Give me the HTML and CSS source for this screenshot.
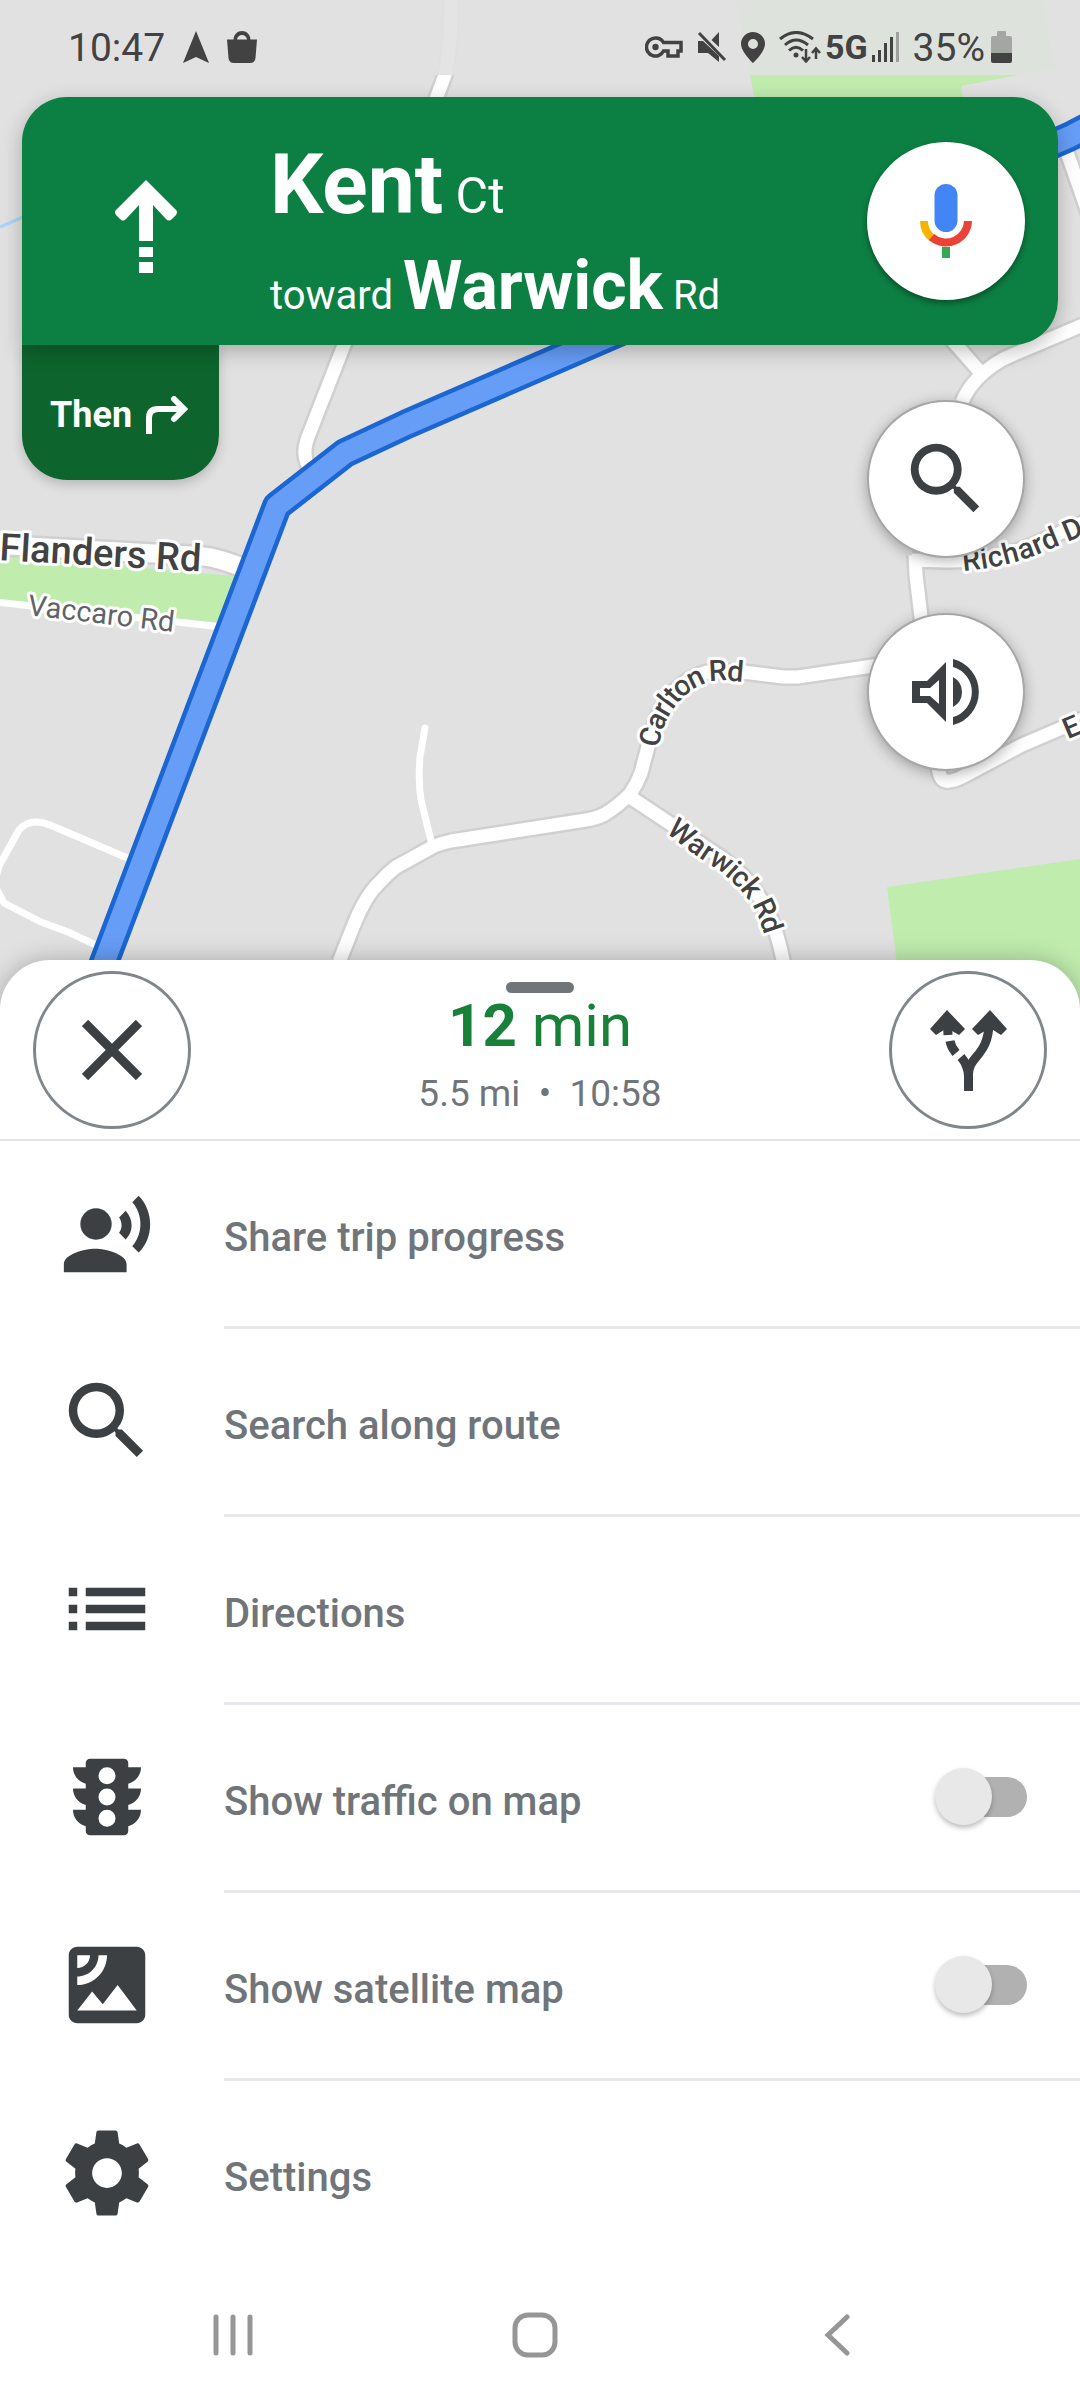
FILE: index.html
```html
<!DOCTYPE html>
<html lang="en">
<head>
  <meta charset="UTF-8" />
  <meta name="viewport" content="width=device-width, initial-scale=1.0"/>
  <title>Navigation</title>
  <link rel="stylesheet" href="styles.css">
</head>
<body>
  <div class="app">
    <main class="nav-view">
      <svg class="map" viewBox="0 0 1080 1010" preserveAspectRatio="xMidYMin slice" role="img" aria-label="Map">
        <defs>
          <path id="carltonPath" d="M649 746Q653 717 670 697Q687 676 714 671Q727 669 772 676"/>
          <path id="warwickPath" d="M672 824Q696 845 723 861Q753 884 765 908Q773 925 779 952"/>
          <path id="richardPath" d="M962 561Q1000 558 1032 546L1130 505"/>
          <path id="estatePath" d="M1064 730L1140 698"/>
          <path id="flandersPath" d="M-1 560L230 573"/>
          <path id="vaccaroPath" d="M27 615L200 635"/>
          <g id="roads">
            <path d="M451 0V20Q450 50 445 75L344 345L308 437Q303 450 306 460Q307 466 315 475"/>
            <path d="M339 962L355 922Q366 895 380 882Q388 873 396 867L434 846Q442 843 451 841L586 820Q598 818 605 814Q618 806 630 794Q637 784 641 773L649 743Q655 715 669 697Q686 676 712 671L743 672L783 677H798L900 662"/>
            <path d="M630 797L722 858Q752 880 764 906Q775 922 783 960L790 1010"/>
            <path d="M930 315L981 373"/>
            <path d="M962 402Q968 388 978 378Q994 362 1012 355L1090 322"/>
            <path d="M1062 138L1090 218"/>
            <path d="M915 555L916 575L921 617L926 660"/>
            <path d="M912 560L945 561Q990 562 1030 546L1090 520"/>
            <path d="M938 765Q939 780 946 781Q952 782 962 777L1022 745L1090 716"/>
          </g>
        </defs>

        <rect width="1080" height="1010" fill="#e1e1e1"/>
        <g fill="#c0ecae">
          <path d="M736 0H1043L1055 68L961 86L965 110H757L750 75Z"/>
          <path d="M0 555L245 577L222 623L0 600Z"/>
          <path d="M887 887L1080 859V1010H903Z"/>
        </g>
        <path d="M0 227L30 214" stroke="#a9d5fa" stroke-width="3"/>

        <use href="#roads" fill="none" stroke="#d0d0d0" stroke-width="18"/>
        <path d="M0 545L200 556Q222 558 250 571" fill="none" stroke="#d0d0d0" stroke-width="23"/>
        <g fill="none" stroke="#fff">
          <use href="#roads" stroke-width="13"/>
          <path d="M0 545L200 556Q222 558 250 571" stroke-width="18"/>
          <g stroke-width="7" stroke-linecap="round" stroke-linejoin="round">
            <path d="M-4 602L222 627"/>
            <path d="M132 860L76 836L50 825Q30 817 19 830L-1 866L-6 884L4 903L41 922L68 932L98 946"/>
            <path d="M425 728L420 757Q418 780 421 800L432 845"/>
          </g>
        </g>

        <g fill="none" stroke-linejoin="round">
          <path d="M1110 116L1069 137L407 424L345 453L277 506L86 1010" stroke="#1b66d1" stroke-width="30"/>
          <path d="M1110 116L1069 137L407 424L345 453L277 506L86 1010" stroke="#669df6" stroke-width="21"/>
        </g>

        <g class="road-label">
          <text class="major"><textPath href="#flandersPath">Flanders Rd</textPath></text>
          <text class="minor"><textPath href="#vaccaroPath">Vaccaro Rd</textPath></text>
          <text dy="10"><textPath href="#carltonPath">Carlton Rd</textPath></text>
          <text dy="10"><textPath href="#warwickPath">Warwick Rd</textPath></text>
          <text dy="10"><textPath href="#richardPath">Richard Dr</textPath></text>
          <text dy="10"><textPath href="#estatePath">Es</textPath></text>
        </g>
      </svg>

      <header class="status-bar">
        <div class="status-left">
          <span class="clock">10:47</span>
          <svg width="26" height="32" viewBox="0 0 26 32"><path d="M13 0L26 32L13 26L0 32Z"/></svg>
          <svg width="30" height="32" viewBox="0 0 30 32"><path d="M0 8.500H6.500C7 3 10.500 0 15 0S23 3 23.500 8.500H30L28.500 27Q28 32 23 32H7Q2 32 1.500 27ZM10 8.500H20C19.500 5.500 17.500 4 15 4S10.500 5.500 10 8.500Z"/></svg>
        </div>
        <div class="status-right">
          <svg width="38" height="22" viewBox="0 0 38 22"><path d="M10.500 2A9 9 0 1 0 18.500 15H23V20H33V15H36V6.500H18.500A9 9 0 0 0 10.500 2Z" fill="none" stroke="#424242" stroke-width="3.500"/><circle cx="10.500" cy="11" r="3.200"/></svg>
          <svg width="30" height="32" viewBox="0 0 30 32"><path d="M1 10H6L22 25V31L11 22H1ZM22 1V16L14.500 9Z"/><path d="M2 2L28 29" stroke="#424242" stroke-width="3"/></svg>
          <svg width="24" height="31" viewBox="0 0 24 31"><path fill-rule="evenodd" d="M12 0C5.400 0 0 5.400 0 12C0 20 12 31 12 31S24 20 24 12C24 5.400 18.600 0 12 0ZM12 7A5 5 0 1 1 12 17A5 5 0 1 1 12 7Z"/></svg>
          <div class="network">
            <svg width="42" height="32" viewBox="0 0 42 32"><g fill="none" stroke="#424242" stroke-width="3"><path d="M1 8Q17-5 34 8M6 14Q17 4 29 14M10 19.500Q17 13 24 19.500"/><path d="M27 18V30M23 26L27 30.500L31 26M37 28V18M33 22L37 17.500L41 22" stroke-width="2.500"/></g><circle cx="17" cy="24" r="2.500"/></svg>
            <span>5G</span>
            <svg width="27" height="30" viewBox="0 0 27 30"><path d="M0 23h3v7H0zM6 18h3v12H6zM12 11h3v19h-3zM18 5h3v25h-3z"/><path d="M24 0h3v30h-3z" fill="#9f9f9f"/></svg>
          </div>
          <div class="battery">
            <span>35%</span>
            <svg width="21" height="32" viewBox="0 0 21 32"><path d="M6 1q0-1 1-1h7q1 0 1 1v4h4q2 0 2 2v15H0V7q0-2 2-2h4z" fill="#a4a6a3"/><path d="M0 22h21v8q0 2-2 2H2q-2 0-2-2z"/></svg>
          </div>
        </div>
      </header>

      <section class="banner">
        <svg class="straight" width="62" height="93" viewBox="0 0 62 93" fill="#fff"><path d="M31 0L61 30Q63 32 61 35L57 39Q54 42 51 39L38 25V61H24V25L11 39Q8 42 5 39L1 35Q-1 32 1 30ZM24 67H38V77H24ZM24 82H38V93H24Z"/></svg>
        <div class="street">
          <h1>Kent<small> Ct</small></h1>
          <p><span>toward </span>Warwick<span> Rd</span></p>
        </div>
        <button class="round-btn mic" aria-label="Voice search">
          <svg width="52" height="74" viewBox="0 0 52 74"><rect x="14.500" width="23" height="48" rx="11.500" fill="#4285f4"/><path d="M4 37A22 22 0 0 0 12 54" fill="none" stroke="#f4b400" stroke-width="8"/><path d="M11.500 53A22 22 0 0 0 48 37" fill="none" stroke="#ea4335" stroke-width="8"/><path d="M22 63h8v11h-8z" fill="#34a853"/></svg>
        </button>
      </section>

      <div class="below-banner">
        <div class="then">
          <span>Then</span>
          <svg width="42" height="38" viewBox="0 0 42 38" fill="none" stroke="#fff" stroke-width="6"><path d="M3 38V22Q3 13 12 13H37"/><path d="M28 3L38 13L28 23" stroke-linecap="round"/></svg>
        </div>
        <div class="fabs">
          <button class="round-btn fab" aria-label="Search">
            <svg width="94" height="94" viewBox="0 0 24 24"><path d="M15.500 14h-.79l-.28-.27A6.471 6.471 0 0 0 16 9.500 6.500 6.500 0 1 0 9.500 16c1.610 0 3.090-.59 4.230-1.570l.27.28v.79l5 4.990L20.490 19l-4.990-5zm-6 0C7.010 14 5 11.990 5 9.500S7.010 5 9.500 5 14 7.010 14 9.500 11.990 14 9.500 14z"/></svg>
          </button>
          <button class="round-btn fab" aria-label="Sound">
            <svg width="68" height="68" viewBox="0 0 68 68"><path fill-rule="evenodd" d="M0 23H15L34 4V64L15 45H0ZM8 30V38H18L27 46V22L18 30Z"/><path d="M41 19Q50 24 50 34T41 49ZM41 1A34 34 0 0 1 41 67V59A26 26 0 0 0 41 9Z"/></svg>
          </button>
        </div>
      </div>
    </main>

    <section class="sheet">
      <div class="trip">
        <button class="round-btn outlined" aria-label="Close">
          <svg width="60" height="60" viewBox="0 0 60 60" fill="none" stroke="#3c4043" stroke-width="9"><path d="M3 3L57 57M57 3L3 57"/></svg>
        </button>
        <div class="eta">
          <div class="handle"></div>
          <p class="time"><b>12</b> min</p>
          <p class="distance">5.5 mi &nbsp;•&nbsp; 10:58</p>
        </div>
        <button class="round-btn outlined" aria-label="Alternate routes">
          <svg width="77" height="81" viewBox="0 0 77 81"><path d="M17 0L35 19L29 25L17 18L6 25L0 19ZM60 0L77 19L71 25L60 18L48 25L42 19Z"/><g fill="none" stroke="#3c4043" stroke-width="9"><path d="M38.500 81V64C38.500 46 59 46 59 12"/><path d="M38.500 66Q38 55 31 47M26 43Q21 37 20 31M18 25L17.500 12"/></g></svg>
        </button>
      </div>

      <ul class="menu">
        <li>
          <svg class="icon" viewBox="-1 -2 26 26"><circle cx="9.200" cy="8.700" r="4"/><path d="M9 15c-2.670 0-8 1.340-8 4v2h16v-2c0-2.660-5.330-4-8-4zM16.760 5.360l-1.680 1.690c.84 1.180.84 2.710 0 3.890l1.680 1.690c2.020-2.020 2.020-5.070 0-7.270zM20.070 1.500l-1.630 1.630c2.770 3.020 2.770 8.060 0 11.240L20.070 16c3.900-3.890 3.910-10.450 0-14.500z"/></svg>
          <button class="menu-label">Share trip progress</button>
        </li>
        <li>
          <svg class="icon" viewBox="0 0 24 24"><path d="M15.500 14h-.79l-.28-.27A6.471 6.471 0 0 0 16 9.500 6.500 6.500 0 1 0 9.500 16c1.610 0 3.090-.59 4.230-1.570l.27.28v.79l5 4.990L20.490 19l-4.990-5zm-6 0C7.010 14 5 11.990 5 9.500S7.010 5 9.500 5 14 7.010 14 9.500 11.990 14 9.500 14z"/></svg>
          <button class="menu-label">Search along route</button>
        </li>
        <li>
          <svg class="icon" viewBox="0 0 24 24"><path d="M3 7h2v2H3zM3 11h2v2H3zM3 15h2v2H3zM7 7h14v2H7zM7 11h14v2H7zM7 15h14v2H7z"/></svg>
          <button class="menu-label">Directions</button>
        </li>
        <li>
          <svg class="icon" viewBox="0 0 24 24"><path d="M20 10h-3V8.860c1.720-.45 3-2 3-3.860h-3V4c0-.55-.45-1-1-1H8c-.55 0-1 .45-1 1v1H4c0 1.860 1.280 3.410 3 3.860V10H4c0 1.860 1.280 3.410 3 3.860V15H4c0 1.860 1.280 3.410 3 3.860V20c0 .55.45 1 1 1h8c.55 0 1-.45 1-1v-1.140c1.720-.45 3-2 3-3.860h-3v-1.140c1.720-.45 3-2 3-3.860zm-8 9a2 2 0 1 1 0-4 2 2 0 0 1 0 4zm0-5a2 2 0 1 1 0-4 2 2 0 0 1 0 4zm0-5a2 2 0 1 1 0-4 2 2 0 0 1 0 4z"/></svg>
          <label class="menu-label" for="traffic">Show traffic on map</label>
          <input class="toggle" type="checkbox" id="traffic">
        </li>
        <li>
          <svg class="icon" viewBox="0 0 24 24"><path d="M19 3H5c-1.100 0-2 .9-2 2v14c0 1.100.9 2 2 2h14c1.100 0 2-.9 2-2V5c0-1.100-.9-2-2-2zM5 4.990h3C8 6.650 6.660 8 5 8V4.990zM5 12v-2c2.760 0 5-2.250 5-5.010h2C12 8.860 8.870 12 5 12zm0 6l3.500-4.500 2.500 3.010L14.500 12l4.500 6H5z"/></svg>
          <label class="menu-label" for="satellite">Show satellite map</label>
          <input class="toggle" type="checkbox" id="satellite">
        </li>
        <li>
          <svg class="icon" viewBox="0 0 24 24"><path d="M19.430 12.980c.04-.32.07-.64.07-.98s-.03-.66-.07-.98l2.110-1.650c.19-.15.24-.42.12-.64l-2-3.460c-.12-.22-.39-.3-.61-.22l-2.490 1c-.52-.4-1.080-.73-1.690-.98l-.38-2.650A.488.488 0 0 0 14 2h-4c-.25 0-.46.18-.49.42l-.38 2.650c-.61.25-1.170.59-1.690.98l-2.490-1c-.23-.09-.49 0-.61.22l-2 3.460c-.13.22-.07.49.12.64l2.110 1.650c-.04.32-.07.65-.07.98s.03.66.07.98l-2.110 1.650c-.19.15-.24.42-.12.64l2 3.460c.12.22.39.3.61.22l2.490-1c.52.4 1.080.73 1.690.98l.38 2.650c.03.24.24.42.49.42h4c.25 0 .46-.18.49-.42l.38-2.650c.61-.25 1.170-.59 1.690-.98l2.490 1c.23.09.49 0 .61-.22l2-3.460c.12-.22.07-.49-.12-.64l-2.110-1.650zM12 15.500c-1.930 0-3.500-1.570-3.500-3.500s1.570-3.500 3.500-3.500 3.500 1.570 3.500 3.500-1.570 3.500-3.500 3.500z"/></svg>
          <button class="menu-label">Settings</button>
        </li>
      </ul>
    </section>

    <nav class="system-nav">
      <button aria-label="Recent apps"><svg width="40" height="42" viewBox="0 0 40 42" stroke-linecap="round"><path d="M3 3V39M20 3V39M37 3V39"/></svg></button>
      <button aria-label="Home"><svg width="46" height="46" viewBox="0 0 46 46"><rect x="3" y="3" width="40" height="40" rx="13"/></svg></button>
      <button aria-label="Back"><svg width="26" height="42" viewBox="0 0 26 42" stroke-linecap="round"><path d="M23 3L4 21L23 39"/></svg></button>
    </nav>
  </div>
</body>
</html>
```

FILE: styles.css
```css
* {
  box-sizing: border-box;
}
body {
  margin: 0;
  font-family: Roboto, sans-serif;
  background: #fff;
  color: #70757a;
}
h1, p, ul {
  margin: 0;
  padding: 0;
}
button {
  padding: 0;
  border: none;
  background: none;
  font-family: inherit;
  cursor: pointer;
}
svg {
  display: block;
  flex-shrink: 0;
}
.app {
  display: flex;
  flex-direction: column;
  min-height: 100vh;
}

/* map */
.nav-view {
  position: relative;
  padding-bottom: 239px;
  overflow: hidden;
}
.map {
  position: absolute;
  top: 0;
  left: 0;
  width: 100%;
  height: 100%;
}
.road-label {
  font-size: 29px;
  font-weight: 500;
  fill: #424242;
  stroke: #fff;
  stroke-width: 6px;
  stroke-linejoin: round;
  paint-order: stroke;
}
.road-label .major { font-size: 38px; }
.road-label .minor {
  font-weight: 400;
  fill: #5f6368;
}

/* status bar */
.status-bar {
  position: relative;
  display: flex;
  justify-content: space-between;
  height: 75px;
  padding: 17px 68px 0;
  background: rgba(225, 225, 225, 0.9);
  color: #424242;
  fill: #424242;
  font-size: 39px;
  line-height: 60px;
}
.status-left, .status-right, .network, .battery {
  display: flex;
  align-items: center;
  height: 60px;
}
.status-left { gap: 18px; }
.clock, .battery span { padding-top: 2px; }
.status-right { gap: 14px; }
.network { gap: 4px; }
.network span {
  font-size: 34px;
  font-weight: 700;
}
.battery { gap: 6px; }

/* directions banner */
.banner {
  position: relative;
  z-index: 1;
  display: flex;
  align-items: center;
  gap: 93px;
  min-height: 248px;
  margin: 22px 22px 0;
  padding: 0 33px 0 93px;
  border-radius: 45px 45px 45px 0;
  background: #0c8043;
  color: #fff;
  box-shadow: 0 6px 20px rgba(0, 0, 0, 0.25);
}
.straight { margin-top: 10px; }
.street {
  flex: 1;
  padding-top: 20px;
  white-space: nowrap;
}
.street h1 {
  font-size: 84px;
  font-weight: 700;
  line-height: 96px;
}
.street p {
  margin-top: 13px;
  font-size: 68px;
  font-weight: 700;
  line-height: 80px;
}
.street small, .street span {
  font-size: 50px;
  font-weight: 400;
  line-height: 1;
}
.street span { font-size: 40px; }
.round-btn {
  display: flex;
  align-items: center;
  justify-content: center;
  flex-shrink: 0;
  width: 158px;
  height: 158px;
  border-radius: 50%;
  background: #fff;
  fill: #3c4043;
}
.mic { box-shadow: 0 3px 6px rgba(0, 0, 0, 0.4); }
.below-banner {
  position: relative;
  display: flex;
  justify-content: space-between;
  align-items: flex-start;
  padding: 0 55px 0 22px;
}
.then {
  display: flex;
  align-items: center;
  gap: 14px;
  width: 197px;
  height: 135px;
  padding: 4px 0 0 28px;
  border-radius: 0 0 45px 45px;
  background: #0d652d;
  color: #fff;
  font-size: 36px;
  font-weight: 700;
  box-shadow: 0 4px 12px rgba(0, 0, 0, 0.2);
}
.fabs {
  display: flex;
  flex-direction: column;
  gap: 55px;
  padding-top: 55px;
}
.fab {
  border: 2px solid #a6a6a6;
  box-shadow: 0 3px 14px rgba(0, 0, 0, 0.3);
}

/* bottom sheet */
.sheet {
  position: relative;
  margin-top: -50px;
  border-radius: 50px 50px 0 0;
  background: #fff;
  box-shadow: 0 0 24px rgba(0, 0, 0, 0.25);
  clip-path: inset(-40px 0 0 0);
}
.trip {
  display: flex;
  justify-content: space-between;
  align-items: flex-start;
  padding: 11px 33px 10px;
  border-bottom: 2px solid #e3e3e5;
}
.outlined { border: 3px solid #80868b; }
.eta {
  padding-top: 11px;
  text-align: center;
}
.handle {
  width: 68px;
  height: 11px;
  margin: 0 auto;
  border-radius: 6px;
  background: #70757a;
}
.time {
  color: #188038;
  font-size: 60px;
  line-height: 66px;
}
.distance {
  margin-top: 13px;
  font-size: 37px;
  line-height: 44px;
}
.menu { list-style: none; }
.menu li {
  position: relative;
  display: flex;
  align-items: center;
  gap: 66px;
  height: 188px;
  padding: 0 53px 4px 56px;
}
.menu li:not(:last-child)::after {
  content: "";
  position: absolute;
  left: 224px;
  right: 0;
  bottom: 0;
  height: 3px;
  background: #e8e8ec;
}
.icon {
  width: 102px;
  height: 102px;
  fill: #3c4043;
}
.menu-label {
  flex: 1;
  padding-top: 9px;
  color: #70757a;
  font-size: 40px;
  font-weight: 500;
  text-align: left;
  cursor: pointer;
}
.toggle {
  appearance: none;
  position: relative;
  width: 80px;
  height: 40px;
  margin: 0;
  border-radius: 20px;
  background: #b1b1b1;
  cursor: pointer;
}
.toggle::before {
  content: "";
  position: absolute;
  top: -9px;
  left: -12px;
  width: 57px;
  height: 57px;
  border-radius: 50%;
  background: #e8e8e8;
  box-shadow: 0 3px 5px rgba(0, 0, 0, 0.25);
}
.toggle:checked { background: #8ab4f8; }
.toggle:checked::before {
  left: 35px;
  background: #1a73e8;
}

/* android buttons */
.system-nav {
  display: flex;
  justify-content: space-between;
  height: 130px;
  margin-top: auto;
  padding: 0 193px 0 183px;
}
.system-nav button {
  display: flex;
  align-items: center;
  justify-content: center;
  width: 100px;
}
.system-nav svg {
  fill: none;
  stroke: #969696;
  stroke-width: 5px;
}
```
